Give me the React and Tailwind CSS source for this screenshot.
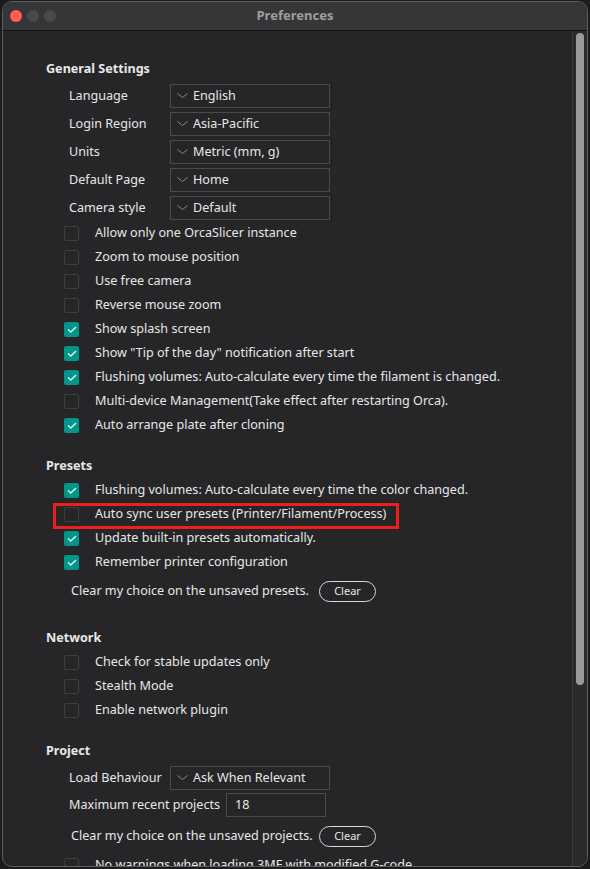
import React from "react";

const font = { fontFamily: '"Noto Sans", "Open Sans", sans-serif' };

function Chevron() {
  return (
    <svg width="11" height="6" viewBox="0 0 11 6" className="shrink-0">
      <polyline points="0.5,0.5 5.5,4.5 10.5,0.5" fill="none" stroke="#8a8a8a" strokeWidth="1" />
    </svg>
  );
}

function Select({ value, width = "w-[160px]" }) {
  return (
    <div className={`flex h-[24px] ${width} items-center gap-[5px] border border-[#4a4a4a] pl-[6px] text-[12.6px] text-[#e6e6e6]`}>
      <Chevron />
      <span>{value}</span>
    </div>
  );
}

function Check({ on }) {
  if (on) {
    return (
      <div className="flex h-[15px] w-[15px] shrink-0 items-center justify-center rounded-[2px] bg-[#009688]">
        <svg width="10" height="7" viewBox="0 0 10 7">
          <polyline points="1,3.5 3.8,6 9,1" fill="none" stroke="#e8f5f3" strokeWidth="1.3" />
        </svg>
      </div>
    );
  }
  return <div className="h-[15px] w-[15px] shrink-0 rounded-[2px] border border-[#3e3e40]" />;
}

function CheckRow({ on, label, children }) {
  return (
    <div className="relative flex h-[24px] items-center pl-[64px]">
      <Check on={on} />
      <span className="ml-[16px] whitespace-nowrap pt-[1px] text-[12.6px] text-[#e6e6e6]">{label}</span>
      {children}
    </div>
  );
}

function Header({ children, className = "" }) {
  return <div className={`h-[20px] pl-[46px] text-[12.6px] font-bold leading-[20px] text-[#e8e8e8] ${className}`}>{children}</div>;
}

function SelectRow({ label, value }) {
  return (
    <div className="flex h-[24px] items-center pl-[69px]">
      <span className="w-[101px] text-[12.6px] text-[#e6e6e6]">{label}</span>
      <Select value={value} />
    </div>
  );
}

function ClearRow({ label }) {
  return (
    <div className="flex h-[24px] items-center pl-[71px]">
      <span className="w-[248px] whitespace-nowrap text-[12.6px] text-[#e6e6e6]">{label}</span>
      <button className="h-[21px] w-[57px] rounded-full border border-[#d8d8d8] text-[11px] text-[#e6e6e6]">Clear</button>
    </div>
  );
}

export default function App() {
  return (
    <div className="h-[869px] w-[590px] overflow-hidden bg-[#1c1c1e] pl-[2px] pt-[1px]" style={font}>
      <div className="flex h-[866px] w-[586px] flex-col overflow-hidden rounded-[10px] border border-[#5c5c5e] bg-[#262628]">
        <div className="relative flex h-[29px] shrink-0 items-center border-b border-[#111] bg-[#363638]">
          <div className="flex items-center gap-[5px] pl-[7px]">
            <div className="h-[12px] w-[12px] rounded-full bg-[#fe5f57]" />
            <div className="h-[12px] w-[12px] rounded-full bg-[#4a4a4c]" />
            <div className="h-[12px] w-[12px] rounded-full bg-[#4a4a4c]" />
          </div>
          <div className="absolute inset-0 flex items-center justify-center text-[13px] font-bold text-[#9e9e9e]">Preferences</div>
        </div>
        <div className="flex min-h-0 flex-1">
          <div className="min-w-0 flex-1 overflow-hidden">
            <Header className="mt-[28px] -ml-[3px]">General Settings</Header>
            <div className="-ml-[3px] mt-[5px] flex flex-col gap-[4px]">
              <SelectRow label="Language" value="English" />
              <SelectRow label="Login Region" value="Asia-Pacific" />
              <SelectRow label="Units" value="Metric (mm, g)" />
              <SelectRow label="Default Page" value="Home" />
              <SelectRow label="Camera style" value="Default" />
            </div>
            <div className="-ml-[3px] mt-[1px]">
              <CheckRow label="Allow only one OrcaSlicer instance" />
              <CheckRow label="Zoom to mouse position" />
              <CheckRow label="Use free camera" />
              <CheckRow label="Reverse mouse zoom" />
              <CheckRow on label="Show splash screen" />
              <CheckRow on label={'Show "Tip of the day" notification after start'} />
              <CheckRow on label="Flushing volumes: Auto-calculate every time the filament is changed." />
              <CheckRow label="Multi-device Management(Take effect after restarting Orca)." />
              <CheckRow on label="Auto arrange plate after cloning" />
            </div>

            <Header className="mt-[19px] -ml-[3px]">Presets</Header>
            <div className="-ml-[3px] mt-[2px]">
              <CheckRow on label="Flushing volumes: Auto-calculate every time the color changed." />
              <CheckRow label="Auto sync user presets (Printer/Filament/Process)">
                <div className="absolute left-[53px] top-[1px] h-[26px] w-[346px] border-[3px] border-[#e9201c]" />
              </CheckRow>
              <CheckRow on label="Update built-in presets automatically." />
              <CheckRow on label="Remember printer configuration" />
            </div>
            <div className="-ml-[3px] mt-[5px]">
              <ClearRow label="Clear my choice on the unsaved presets." />
            </div>

            <Header className="mt-[25px] -ml-[3px]">Network</Header>
            <div className="-ml-[3px] mt-[2px]">
              <CheckRow label="Check for stable updates only" />
              <CheckRow label="Stealth Mode" />
              <CheckRow label="Enable network plugin" />
            </div>

            <Header className="mt-[19px] -ml-[3px]">Project</Header>
            <div className="-ml-[3px] mt-[5px] flex h-[24px] items-center pl-[69px]">
              <span className="w-[101px] text-[12.6px] text-[#e6e6e6]">Load Behaviour</span>
              <Select value="Ask When Relevant" />
            </div>
            <div className="-ml-[3px] mt-[3px] flex h-[24px] items-center pl-[69px]">
              <span className="whitespace-nowrap text-[12.6px] text-[#e6e6e6]">Maximum recent projects</span>
              <div className="ml-[6px] flex h-[24px] w-[100px] items-center border border-[#4a4a4a] pl-[8px] text-[12.6px] text-[#e6e6e6]">18</div>
            </div>
            <div className="-ml-[3px] mt-[7px]">
              <ClearRow label="Clear my choice on the unsaved projects." />
            </div>
            <div className="-ml-[3px] mt-[5px]">
              <CheckRow label="No warnings when loading 3MF with modified G-code" />
            </div>
          </div>
          <div className="flex w-[15px] shrink-0 justify-center border-l border-[#3c3c3e] bg-[#2a2a2c] pt-[2px]">
            <div className="h-[652px] w-[8px] rounded-full bg-[#9a9a9a]" />
          </div>
        </div>
      </div>
    </div>
  );
}
